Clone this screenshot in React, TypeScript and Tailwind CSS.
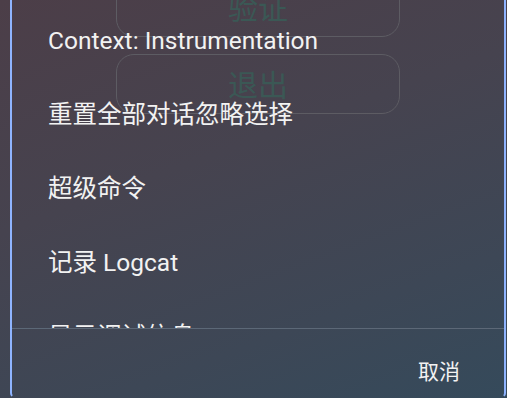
const latin = "font-['Roboto','Noto_Sans_CJK_SC',sans-serif]";

const items = [
  "Context: Instrumentation",
  "重置全部对话忽略选择",
  "超级命令",
  "记录 Logcat",
  "显示调试信息",
];

function BackdropButton({ label }: { label: string }) {
  return (
    <div className="w-[284px] h-[60px] rounded-[18px] border border-[#5d5c63] flex items-center justify-center pt-[4px]">
      <span className="text-[30px] text-[#3b5855] leading-none">{label}</span>
    </div>
  );
}

export default function App() {
  return (
    <div
      className={`relative w-[507px] h-[398px] overflow-hidden bg-[linear-gradient(160deg,#4c3e48_0%,#46434f_40%,#3d4756_75%,#354a5b_100%)] ${latin}`}
    >
      {/* screen behind the dialog */}
      <div className="flex flex-col items-center pl-[9px] mt-[-23px]">
        <BackdropButton label="验证" />
        <div className="h-[17px]" />
        <BackdropButton label="退出" />
      </div>

      {/* dialog */}
      <div className="absolute left-[10px] right-[1px] top-0 bottom-0 border-x-2 border-b-2 border-[#8fb4ff] border-b-transparent rounded-b-[5px] flex flex-col">
        <div className="h-[328px] overflow-hidden pt-[4px]">
          {items.map((t) => (
            <div
              key={t}
              className="h-[74px] flex items-center pl-[36px] text-[24.5px] text-[#f2f2f2] leading-none"
            >
              {t}
            </div>
          ))}
        </div>
        <div className="h-px bg-[#5c6877]" />
        <div className="flex-1 flex items-center justify-end pr-[44px] pt-[19px]">
          <span className="text-[21px] text-[#f2f2f2] leading-none">取消</span>
        </div>
      </div>
    </div>
  );
}
